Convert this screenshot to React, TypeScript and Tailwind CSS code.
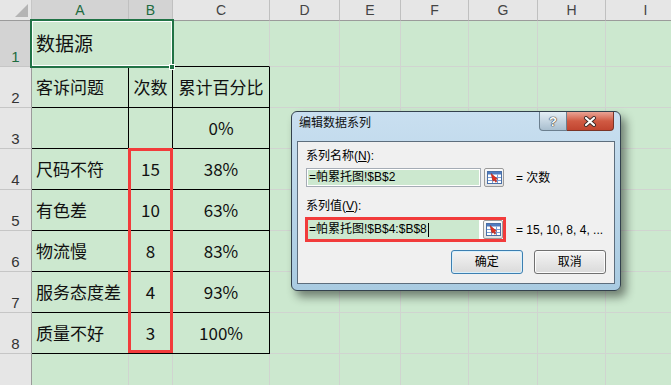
import React from 'react';

const COLS = ['A', 'B', 'C', 'D', 'E', 'F', 'G', 'H', 'I'];

// 表格数据: 第2~8行, A/B/C 三列
const ROWS: Record<number, [string, string, string]> = {
  2: ['客诉问题', '次数', '累计百分比'],
  3: ['', '', '0%'],
  4: ['尺码不符', '15', '38%'],
  5: ['有色差', '10', '63%'],
  6: ['物流慢', '8', '83%'],
  7: ['服务态度差', '4', '93%'],
  8: ['质量不好', '3', '100%'],
};

function RefIcon() {
  return (
    <svg width="15" height="13" viewBox="0 0 15 13">
      <rect x="0.5" y="0.5" width="14" height="12" fill="#fff" stroke="#4a6fa5" />
      <rect x="1" y="1" width="13" height="2.5" fill="#4f7cc0" />
      <path d="M1 6.5H14M1 9.5H14M5.5 3.5V12M10.5 3.5V12" stroke="#7b9fd6" strokeWidth="1" />
      <path d="M4 2.5L10.5 8L8.6 8.3L9.8 10.6L8.6 11.2L7.4 8.9L6 10.2Z" fill="#e2311f" stroke="#a51c10" strokeWidth="0.5" />
    </svg>
  );
}

function RefButton() {
  return (
    <div className="w-[20px] h-[19px] shrink-0 flex items-center justify-center rounded-[2px] border border-[#9a9a9a] bg-gradient-to-b from-[#fbfbfb] to-[#e2e2e2]">
      <RefIcon />
    </div>
  );
}

function Cell({ r, c, text }: { r: number; c: number; text: string }) {
  const inTable = r >= 2 && r <= 8 && c <= 2;
  const bottomBlack = inTable || (r === 1 && c <= 2);
  const align = c === 0 ? 'justify-start pl-[4px]' : 'justify-center';
  return (
    <div
      className={`flex items-center ${align} border-r border-b ${inTable ? 'border-r-black' : 'border-r-[#d0d4d0]'} ${bottomBlack ? 'border-b-black' : 'border-b-[#d0d4d0]'} text-[17px] leading-[20px] text-[#111] whitespace-nowrap overflow-visible`}
    >
      {text}
    </div>
  );
}

export default function App() {
  const rowNums = [1, 2, 3, 4, 5, 6, 7, 8, 9];
  return (
    <div className="relative w-[671px] h-[385px] overflow-hidden bg-[#cce8cf] font-['Noto_Sans_CJK_SC',sans-serif]">
      <div className="grid grid-cols-[32px_97px_44px_97px_70px_61px_68px_69px_68px_80px] grid-rows-[21px_46px_repeat(7,41px)_60px]">
        {/* 左上角 */}
        <div className="relative bg-[#e6e6e6] border-r border-b border-r-[#c6c6c6] border-b-[#9b9b9b]">
          <div className="absolute right-[3px] bottom-[3px] w-0 h-0 border-l-[13px] border-l-transparent border-b-[13px] border-b-[#b4b4b4]" />
        </div>
        {COLS.map((col, i) => (
          <div
            key={col}
            className={`flex items-center justify-center border-r border-b border-r-[#c0c0c0] border-b-[#9b9b9b] font-['Liberation_Sans',sans-serif] text-[14px] ${i <= 1 ? 'bg-[#d3d3d3] text-[#1e6b40]' : 'bg-[#e6e6e6] text-[#444]'}`}
          >
            {col}
          </div>
        ))}

        {rowNums.map(r => (
          <React.Fragment key={r}>
            <div
              className={`flex items-end justify-center pb-[1px] border-r border-b border-r-[#9b9b9b] border-b-[#c6c6c6] font-['Liberation_Sans',sans-serif] text-[15px] leading-[16px] ${r === 1 ? 'bg-[#d3d3d3] text-[#1e6b40]' : 'bg-[#e6e6e6] text-[#333]'}`}
            >
              {r < 9 ? r : ''}
            </div>
            {r === 1 ? (
              <>
                <div className="col-span-2 flex items-center pl-[4px] border-r border-b border-r-[#d0d4d0] border-b-black text-[19px] text-[#111]">
                  数据源
                </div>
                <Cell r={1} c={2} text="" />
              </>
            ) : (
              [0, 1, 2].map(c => <Cell key={c} r={r} c={c} text={ROWS[r]?.[c] ?? ''} />)
            )}
            {[3, 4, 5, 6, 7, 8].map(c => (
              <Cell key={c} r={r} c={c} text="" />
            ))}
          </React.Fragment>
        ))}
      </div>

      {/* 选中框 A1:B1 */}
      <div className="absolute left-[30px] top-[19px] w-[144px] h-[49px] border-2 border-[#217346] shadow-[inset_0_0_0_1px_#fff]" />
      <div className="absolute left-[169px] top-[64px] w-[6px] h-[6px] bg-[#217346] border border-white" />

      {/* 红框 B4:B8 */}
      <div className="absolute left-[128px] top-[148px] w-[45px] h-[205px] border-[3px] border-[#f23b3b]" />

      {/* 编辑数据系列 对话框 */}
      <div className="absolute left-[291px] top-[111px] w-[330px] h-[180px] flex flex-col px-[5px] pb-[6px] rounded-[6px] border border-[#33414d] bg-gradient-to-b from-[#c9dff0] to-[#a9cbe1] shadow-[5px_6px_10px_rgba(0,0,0,0.45)] font-['Liberation_Sans','Noto_Sans_CJK_SC',sans-serif] text-[12px] text-black">
        <div className="h-[29px] flex items-start justify-between">
          <span className="mt-[3px] ml-[2px] leading-[16px] text-[#111]">编辑数据系列</span>
          <div className="flex mr-[1px]">
            <div className="w-[28px] h-[19px] flex items-center justify-center rounded-bl-[4px] border border-t-0 border-[#6b7f8f] bg-gradient-to-b from-[#e4eef5] via-[#c6d6e2] to-[#a9bfcf] text-white font-bold text-[13px] leading-none [text-shadow:0_0_1px_#333,0_0_1px_#333,0_0_1px_#333]">
              ?
            </div>
            <div className="w-[47px] h-[19px] flex items-center justify-center rounded-br-[4px] border border-t-0 border-l-0 border-[#7a3426] bg-gradient-to-b from-[#e9a395] via-[#d05a43] to-[#c14530]">
              <svg width="14" height="11" viewBox="0 0 14 11">
                <path d="M3 2L11 9M11 2L3 9" stroke="#3b2a28" strokeWidth="4" strokeLinecap="round" />
                <path d="M3 2L11 9M11 2L3 9" stroke="#fff" strokeWidth="2.2" strokeLinecap="round" />
              </svg>
            </div>
          </div>
        </div>

        <div className="flex-1 flex flex-col px-[8px] pt-[7px] border border-[#5d6e7d] bg-[#f0f0f0]">
          <div className="leading-[14px]">系列名称(<span className="underline">N</span>):</div>
          <div className="mt-[5px] flex items-center">
            <div className="w-[175px] h-[19px] p-[1px] border border-[#a5acb5] bg-white">
              <div className="h-full bg-[#cce8cf] pl-[1px] leading-[15px]">=帕累托图!$B$2</div>
            </div>
            <div className="ml-[3px]">
              <RefButton />
            </div>
            <span className="ml-[12px]">= 次数</span>
          </div>

          <div className="mt-[12px] leading-[14px]">系列值(<span className="underline">V</span>):</div>
          <div className="mt-[4px] flex items-center">
            <div className="-ml-[1px] w-[201px] h-[25px] flex items-center border-[3px] border-[#f23b3b] bg-white">
              <div className="w-[172px] h-[19px] flex items-center bg-[#cce8cf] pl-[1px] leading-[15px]">
                =帕累托图!$B$4:$B$8
                <span className="ml-[1px] w-[1px] h-[14px] bg-black" />
              </div>
              <div className="ml-[4px]">
                <RefButton />
              </div>
            </div>
            <span className="ml-[10px]">= 15, 10, 8, 4, ...</span>
          </div>

          <div className="mt-[8px] ml-[145px] flex gap-[11px]">
            <div className="w-[72px] h-[24px] flex items-center justify-center rounded-[3px] border border-[#3c7fb1] shadow-[inset_0_0_0_1px_#d8f0fc] bg-gradient-to-b from-[#f4f4f4] to-[#dadada]">
              确定
            </div>
            <div className="w-[73px] h-[24px] flex items-center justify-center rounded-[3px] border border-[#707070] shadow-[inset_0_0_0_1px_#fcfcfc] bg-gradient-to-b from-[#f4f4f4] to-[#dadada]">
              取消
            </div>
          </div>
        </div>
      </div>
    </div>
  );
}
